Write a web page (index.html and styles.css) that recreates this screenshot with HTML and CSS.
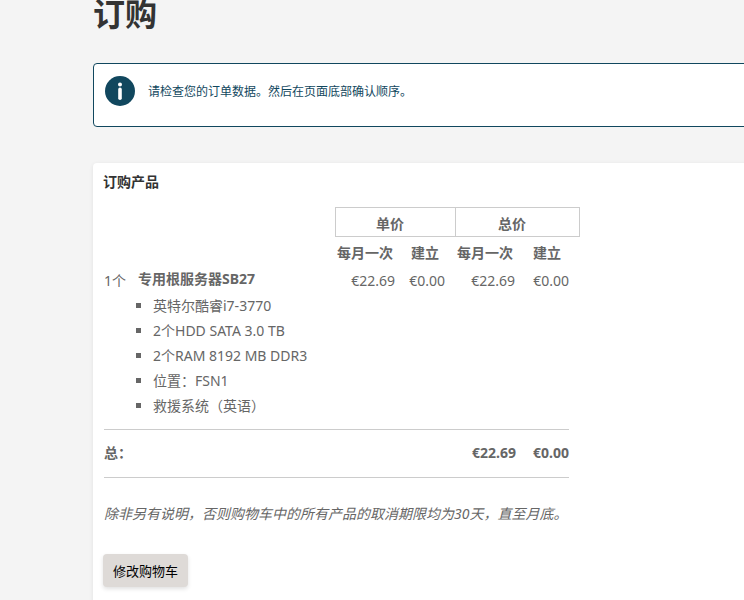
FILE: index.html
```html
<!DOCTYPE html>
<html lang="zh-CN">
<head>
    <meta charset="UTF-8">
    <meta name="viewport" content="width=device-width, initial-scale=1.0">
    <title>订购</title>
    <link rel="stylesheet" href="styles.css">
</head>
<body>
    <main class="page">
        <h1 class="page-title">订购</h1>

        <div class="notice">
            <svg class="notice-icon" viewBox="0 0 30 30" aria-hidden="true">
                <circle cx="15" cy="15" r="15" fill="#11475e"/>
                <circle cx="15" cy="8.6" r="2" fill="#fff"/>
                <path d="M15 13.4V22.2" stroke="#fff" stroke-width="3.6" stroke-linecap="round"/>
            </svg>
            <p class="notice-text">请检查您的订单数据。然后在页面底部确认顺序。</p>
        </div>

        <section class="card">
            <h2 class="card-title">订购产品</h2>

            <table class="products">
                <colgroup>
                    <col class="col-count">
                    <col class="col-name">
                    <col class="col-price">
                    <col class="col-price">
                    <col class="col-price">
                    <col class="col-last">
                </colgroup>
                <thead>
                    <tr class="groups">
                        <td colspan="2"></td>
                        <th colspan="2" scope="colgroup">单价</th>
                        <th colspan="2" scope="colgroup">总价</th>
                    </tr>
                    <tr class="labels">
                        <td colspan="2"></td>
                        <th scope="col">每月一次</th>
                        <th scope="col">建立</th>
                        <th scope="col">每月一次</th>
                        <th scope="col">建立</th>
                    </tr>
                </thead>
                <tbody>
                    <tr>
                        <td class="count">1个</td>
                        <td>
                            <strong class="name">专用根服务器SB27</strong>
                            <ul class="features">
                                <li>英特尔酷睿i7-3770</li>
                                <li>2个HDD SATA 3.0 TB</li>
                                <li>2个RAM 8192 MB DDR3</li>
                                <li>位置：FSN1</li>
                                <li>救援系统（英语）</li>
                            </ul>
                        </td>
                        <td class="price">€22.69</td>
                        <td class="price setup">€0.00</td>
                        <td class="price">€22.69</td>
                        <td class="price setup">€0.00</td>
                    </tr>
                </tbody>
            </table>

            <table class="total">
                <tr>
                    <th scope="row">总：</th>
                    <td>€22.69</td>
                    <td class="total-setup">€0.00</td>
                </tr>
            </table>

            <p class="terms">除非另有说明，否则购物车中的所有产品的取消期限均为30天，直至月底。</p>

            <button type="button" class="btn">修改购物车</button>
        </section>
    </main>
</body>
</html>
```

FILE: styles.css
```css
* {
    box-sizing: border-box;
}

body {
    margin: 0;
    background-color: #f4f4f4;
    color: #666;
    font-family: "Noto Sans", "Noto Sans CJK SC", sans-serif;
    font-size: 14px;
    line-height: 24px;
    overflow: hidden;
}

/* the content column runs past the right edge of the window */
.page {
    margin-left: 93px;
    margin-right: -12px;
}

.page-title {
    margin: 0 0 35px;
    color: #333;
    font-size: 32px;
    line-height: 28px;
}

/* Notice */
.notice {
    display: flex;
    align-items: flex-start;
    gap: 13px;
    min-height: 64px;
    padding: 12px 11px;
    background-color: #fff;
    border: 1px solid #11475e;
    border-radius: 4px;
    color: #11475e;
}

.notice-icon {
    width: 30px;
    height: 30px;
    flex: none;
}

.notice-text {
    margin: 0;
    font-size: 12px;
    line-height: 32px;
}

/* Order card */
.card {
    margin-top: 36px;
    padding: 7px 10px 40px;
    background-color: #fff;
    border-radius: 4px;
    box-shadow: 0 1px 4px rgba(0, 0, 0, 0.08);
}

.card-title {
    margin: 0 0 13px;
    color: #333;
    font-size: 14px;
    line-height: 24px;
}

.products {
    table-layout: fixed;
    width: 476px;
    border-collapse: collapse;
}

.col-count {
    width: 35px;
}

.col-name {
    width: 197px;
}

.col-price {
    width: 60px;
}

.col-last {
    width: 64px;
}

.products td,
.products th {
    padding: 0;
    vertical-align: top;
}

.groups th {
    height: 29px;
    padding-right: 10px;
    padding-top: 4px;
    border: 1px solid #ccc;
    line-height: 23px;
}

.labels th {
    height: 30px;
    padding-top: 4px;
}

.products .count {
    padding: 2px 1px;
}

.products .price {
    padding-top: 2px;
    text-align: right;
}

.products .setup {
    padding-right: 10px;
}

.name {
    display: block;
}

.features {
    margin: 2px 0 0;
    padding-left: 15px;
    list-style: square;
    line-height: 25px;
}

.total {
    width: 465px;
    margin: 11px 1px 0;
    border-collapse: collapse;
}

.total th,
.total td {
    height: 48px;
    padding: 0;
    border-top: 1px solid #ccc;
    border-bottom: 1px solid #ccc;
    font-weight: bold;
    text-align: right;
}

.total th {
    text-align: left;
}

.total .total-setup {
    width: 53px;
}

.terms {
    margin: 24px 0 28px 1px;
    font-style: italic;
}

.btn {
    height: 33px;
    padding: 0 10px;
    background-color: #dedad7;
    border: 0;
    border-radius: 4px;
    box-shadow: 0 2px 4px rgba(0, 0, 0, 0.12);
    color: #000;
    font-family: inherit;
    font-size: 13px;
}
```
